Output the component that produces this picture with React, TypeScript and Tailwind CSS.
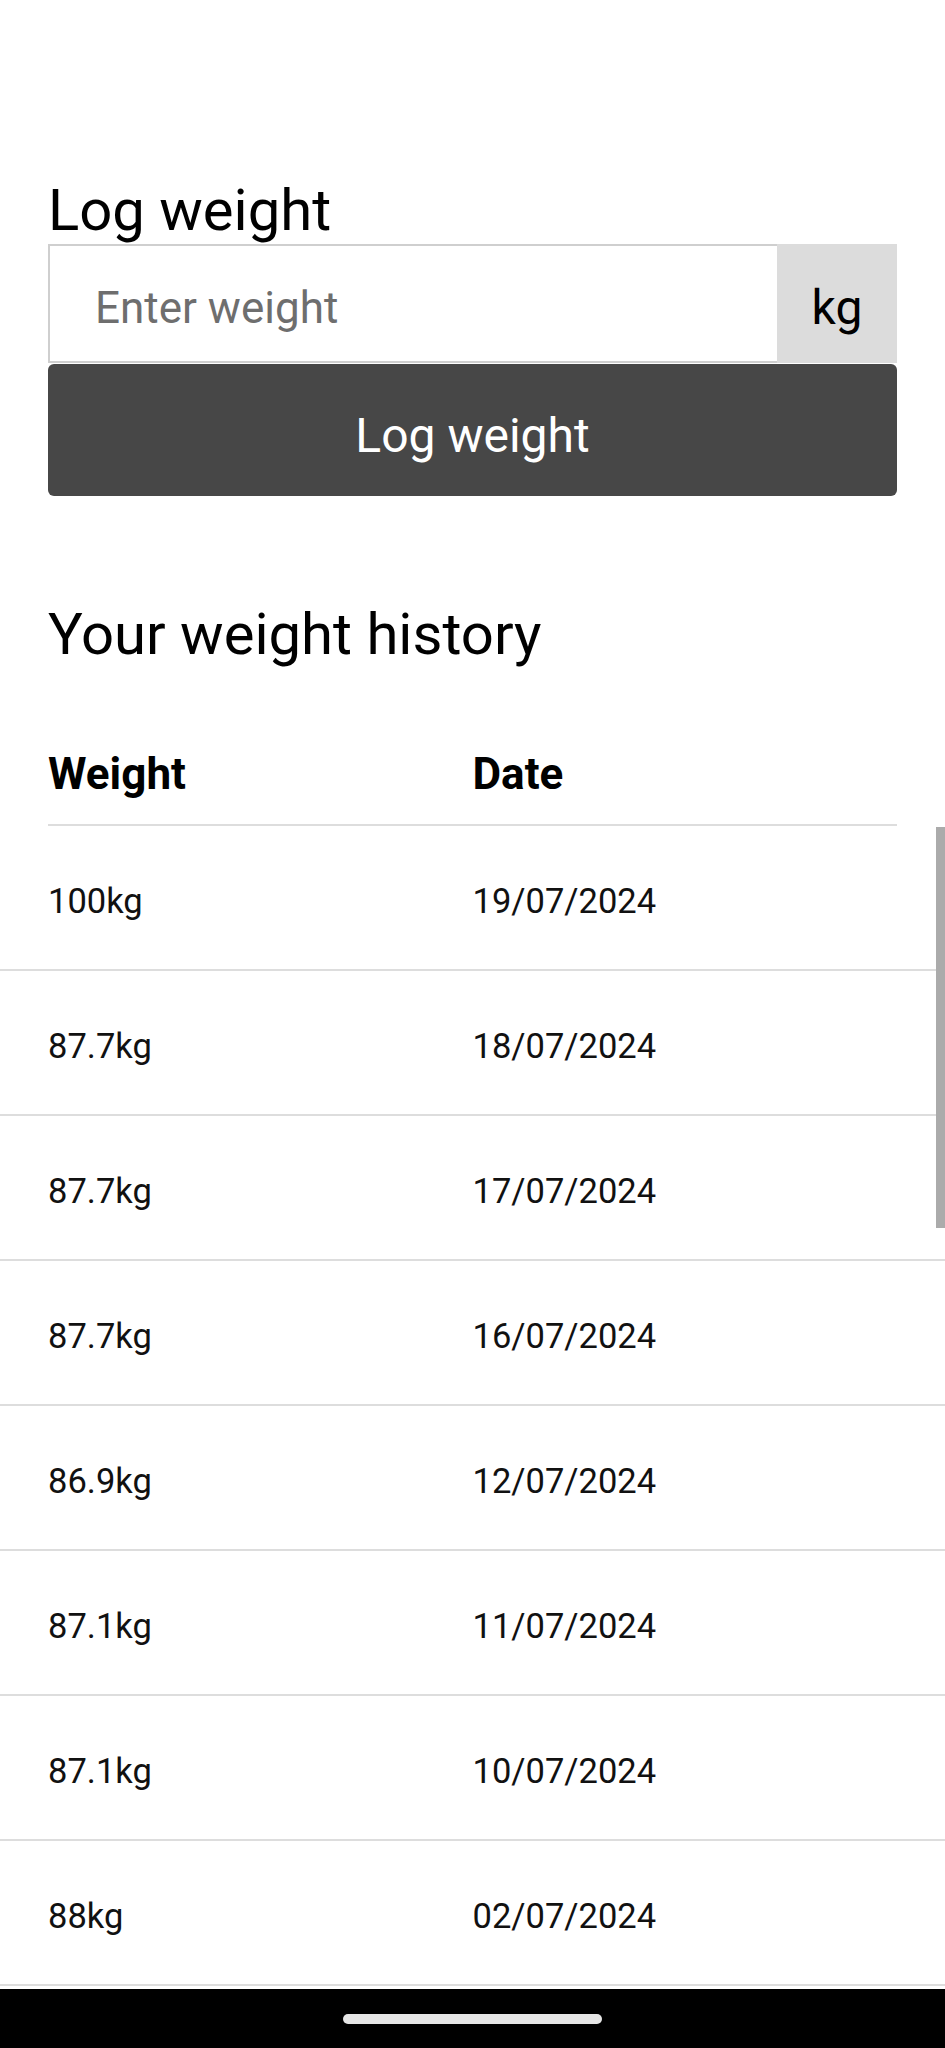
const weights = [
  { weight: '100kg', date: '19/07/2024' },
  { weight: '87.7kg', date: '18/07/2024' },
  { weight: '87.7kg', date: '17/07/2024' },
  { weight: '87.7kg', date: '16/07/2024' },
  { weight: '86.9kg', date: '12/07/2024' },
  { weight: '87.1kg', date: '11/07/2024' },
  { weight: '87.1kg', date: '10/07/2024' },
  { weight: '88kg', date: '02/07/2024' },
];

const App = () => {
  return (
    <div
      className="relative flex h-[2048px] w-full flex-col overflow-hidden bg-white text-black"
      style={{ fontFamily: 'Roboto, "Noto Sans", sans-serif' }}
    >
      <div className="flex-1 overflow-hidden">
        {/* log weight form */}
        <div className="px-12 pt-[178px]">
          <h2 className="mb-[2px] text-[58px] leading-[64px] font-normal">
            Log weight
          </h2>
          <div className="flex h-[119px]">
            <div className="flex flex-1 items-center border-2 border-r-0 border-[#cfcfcf] pl-[45px] pt-2">
              <span className="text-[44px] text-[#6e6e6e]">Enter weight</span>
            </div>
            <div className="flex w-[120px] items-center justify-center bg-[#dcdcdc] pt-2 text-[48px]">
              kg
            </div>
          </div>
          <button className="mt-[1px] flex h-[132px] w-full items-center justify-center rounded-md bg-[#474747] pt-3 text-[48px] text-white">
            Log weight
          </button>
        </div>

        {/* history */}
        <div className="px-12 pt-[106px]">
          <h2 className="text-[58px] leading-[64px] font-normal">
            Your weight history
          </h2>
          <div className="mt-[84px] grid grid-cols-2 border-b-2 border-[#dddddd] pb-[26px] text-[44px] leading-[48px] font-bold">
            <span>Weight</span>
            <span>Date</span>
          </div>
        </div>
        <div>
          {weights.map((w, i) => (
            <div
              key={i}
              className="grid h-[145px] grid-cols-2 items-center border-b-2 border-[#dddddd] px-12 pt-2 text-[34.5px] text-[#111]"
            >
              <span>{w.weight}</span>
              <span>{w.date}</span>
            </div>
          ))}
        </div>
      </div>

      {/* scroll indicator */}
      <div className="absolute top-[827px] right-0 h-[401px] w-[9px] bg-[#ababab]" />

      {/* android nav bar */}
      <div className="flex h-[59px] items-center justify-center bg-black">
        <div className="h-[10px] w-[259px] rounded-full bg-[#e6e6e6]" />
      </div>
    </div>
  );
};

export default App;
